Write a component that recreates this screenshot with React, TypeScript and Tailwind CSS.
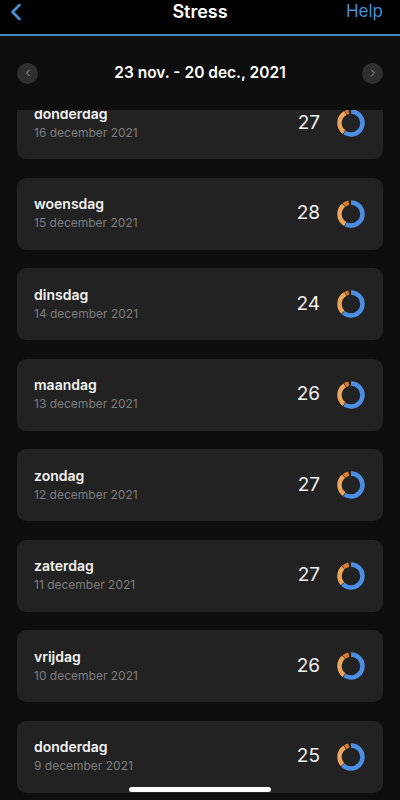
import { ChevronLeft, ChevronRight } from 'lucide-react';

interface Day {
  name: string;
  date: string;
  score: number;
  // fractions of the ring: rest (blue), low (light orange), medium (dark orange)
  rest: number;
  low: number;
  mid: number;
}

const days: Day[] = [
  { name: 'donderdag', date: '16 december 2021', score: 27, rest: 0.6, low: 0.32, mid: 0.05 },
  { name: 'woensdag', date: '15 december 2021', score: 28, rest: 0.58, low: 0.31, mid: 0.08 },
  { name: 'dinsdag', date: '14 december 2021', score: 24, rest: 0.62, low: 0.3, mid: 0.05 },
  { name: 'maandag', date: '13 december 2021', score: 26, rest: 0.6, low: 0.31, mid: 0.06 },
  { name: 'zondag', date: '12 december 2021', score: 27, rest: 0.6, low: 0.29, mid: 0.08 },
  { name: 'zaterdag', date: '11 december 2021', score: 27, rest: 0.63, low: 0.25, mid: 0.09 },
  { name: 'vrijdag', date: '10 december 2021', score: 26, rest: 0.6, low: 0.29, mid: 0.08 },
  { name: 'donderdag', date: '9 december 2021', score: 25, rest: 0.63, low: 0.28, mid: 0.06 },
];

function Ring({ rest, low, mid }: { rest: number; low: number; mid: number }) {
  const r = 11.5;
  const c = 2 * Math.PI * r;
  const gap = 0.008;
  const segs = [
    { f: rest, color: '#4b8fe4' },
    { f: low, color: '#eba55c' },
    { f: mid, color: '#dc7a30' },
  ];
  let offset = 0;
  return (
    <svg width="30" height="30" viewBox="0 0 30 30" className="-rotate-90">
      {segs.map((s, i) => {
        const len = Math.max(s.f - gap, 0) * c;
        const el = (
          <circle
            key={i}
            cx="15"
            cy="15"
            r={r}
            fill="none"
            stroke={s.color}
            strokeWidth="4.5"
            strokeDasharray={`${len} ${c - len}`}
            strokeDashoffset={-offset * c}
          />
        );
        offset += s.f;
        return el;
      })}
    </svg>
  );
}

export default function App() {
  return (
    <div
      className="relative w-[400px] h-[800px] overflow-hidden bg-[#0e0e0e] flex flex-col text-white"
      style={{ fontFamily: 'Inter, "Liberation Sans", sans-serif' }}
    >
      {/* top bar */}
      <div className="h-[36px] shrink-0 bg-black border-b-2 border-[#4a86c0] flex items-center justify-between pl-[2px] pr-[17px] relative">
        <ChevronLeft className="w-[28px] h-[30px] text-[#4a90d9] -mt-[10px]" strokeWidth={2.2} />
        <span className="absolute left-0 right-0 text-center text-[18px] font-semibold -top-[2px]">Stress</span>
        <span className="text-[17px] text-[#4a90d9] -mt-[10px]">Help</span>
      </div>

      {/* date range */}
      <div className="h-[74px] shrink-0 flex items-center justify-between px-[17px]">
        <div className="w-[21px] h-[21px] rounded-full bg-[#2f2f2f] flex items-center justify-center">
          <ChevronLeft className="w-[12px] h-[12px] text-[#9a9a9a]" strokeWidth={2} />
        </div>
        <span className="text-[15.5px] font-semibold">23 nov. - 20 dec., 2021</span>
        <div className="w-[21px] h-[21px] rounded-full bg-[#2f2f2f] flex items-center justify-center">
          <ChevronRight className="w-[12px] h-[12px] text-[#9a9a9a]" strokeWidth={2} />
        </div>
      </div>

      {/* list */}
      <div className="flex-1 overflow-hidden">
        <div className="-mt-[23px] flex flex-col gap-[18.5px] px-[17px]">
          {days.map((d, i) => (
            <div key={i} className="h-[72px] rounded-[9px] bg-[#222222] flex items-center pl-[17px] pr-[17px]">
              <div className="flex-1 flex flex-col">
                <span className="text-[14px] font-semibold leading-[18px] text-[#f2f2f2]">{d.name}</span>
                <span className="text-[12px] leading-[18px] text-[#7d7d7d] mt-[1px]">{d.date}</span>
              </div>
              <span className="text-[19px] text-[#f2f2f2] mr-[16px]">{d.score}</span>
              <Ring rest={d.rest} low={d.low} mid={d.mid} />
            </div>
          ))}
        </div>
      </div>

      {/* home indicator */}
      <div className="absolute bottom-[8px] left-[129px] w-[142px] h-[5px] rounded-full bg-white" />
    </div>
  );
}
